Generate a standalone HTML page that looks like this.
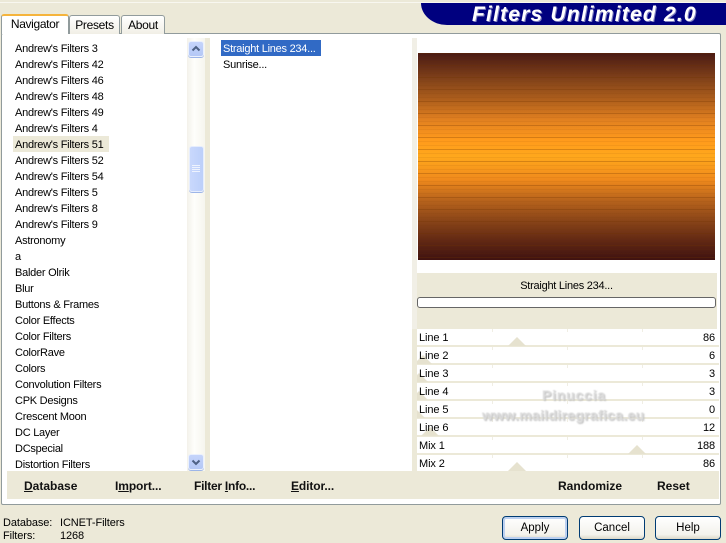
<!DOCTYPE html>
<html><head><meta charset="utf-8">
<style>
html,body{margin:0;padding:0}
body{width:726px;height:543px;overflow:hidden;position:relative;background:#ece9d8;font-family:"Liberation Sans",sans-serif;font-size:11px;color:#000}
div,span.a{position:absolute;white-space:nowrap}
.l{left:15px;height:16px;line-height:18px;letter-spacing:-.25px}
.b{font-weight:bold;font-size:12px;line-height:16px;color:#111}
.tab{background:linear-gradient(#fff,#f1efe6);border:1px solid #919b9c;border-bottom:none;border-radius:3px 3px 0 0;text-align:center;line-height:19px}
.row{left:417px;width:302px;height:16px;background:#fff}
.sep{left:417px;width:302px;height:2px;background:#ece9d8}
.n{left:419px;line-height:18px;height:16px;letter-spacing:-.1px}
.v{right:11px;line-height:18px;height:16px;letter-spacing:-.1px}
.t{width:1px;height:3px;background:#f0eee4}
.tri{width:0;height:0;border-left:9px solid transparent;border-right:9px solid transparent;border-bottom:9px solid #e6e2cf}
.btn{top:516px;width:64px;height:22px;border:1px solid #003c74;border-radius:4px;background:linear-gradient(#fff,#f3f2ec 80%,#dcd8c8);text-align:center;line-height:23px;font-size:11.5px}
u{text-decoration:underline}
</style></head><body>
<div style="left:0;top:2px;width:726px;height:1px;background:#f8f7f0"></div>

<div style="left:421px;top:3px;width:305px;height:22px;background:#00007f;border-bottom-left-radius:26px 22px"></div>
<div style="left:472px;top:3px;height:23px;line-height:23px;font-size:21px;font-weight:bold;font-style:italic;color:#fff;letter-spacing:1.2px;text-shadow:1px 1px 0 #7f7fbf">Filters Unlimited 2.0</div>

<div style="left:1px;top:33px;width:718px;height:470px;background:#fff;border:1px solid #919b9c;border-radius:2px"></div>

<div class="tab" style="left:69px;top:15px;width:49px;height:18px;line-height:19px;font-size:12px;letter-spacing:-.3px">Presets</div>
<div class="tab" style="left:121px;top:15px;width:42px;height:18px;line-height:19px;font-size:12px;letter-spacing:-.3px">About</div>
<div style="left:1px;top:14px;width:66px;height:18px;background:#fff;border:1px solid #919b9c;border-bottom:none;border-top:2px solid #f5b43c;border-radius:3px 3px 0 0;text-align:center;line-height:16px;font-size:12px;letter-spacing:-.35px">Navigator</div>

<div style="left:13px;top:136px;width:96px;height:16px;background:#ece9d8"></div>
<div class="l" style="top:40px">Andrew's Filters 3</div>
<div class="l" style="top:56px">Andrew's Filters 42</div>
<div class="l" style="top:72px">Andrew's Filters 46</div>
<div class="l" style="top:88px">Andrew's Filters 48</div>
<div class="l" style="top:104px">Andrew's Filters 49</div>
<div class="l" style="top:120px">Andrew's Filters 4</div>
<div class="l" style="top:136px">Andrew's Filters 51</div>
<div class="l" style="top:152px">Andrew's Filters 52</div>
<div class="l" style="top:168px">Andrew's Filters 54</div>
<div class="l" style="top:184px">Andrew's Filters 5</div>
<div class="l" style="top:200px">Andrew's Filters 8</div>
<div class="l" style="top:216px">Andrew's Filters 9</div>
<div class="l" style="top:232px">Astronomy</div>
<div class="l" style="top:248px">a</div>
<div class="l" style="top:264px">Balder Olrik</div>
<div class="l" style="top:280px">Blur</div>
<div class="l" style="top:296px">Buttons &amp; Frames</div>
<div class="l" style="top:312px">Color Effects</div>
<div class="l" style="top:328px">Color Filters</div>
<div class="l" style="top:344px">ColorRave</div>
<div class="l" style="top:360px">Colors</div>
<div class="l" style="top:376px">Convolution Filters</div>
<div class="l" style="top:392px">CPK Designs</div>
<div class="l" style="top:408px">Crescent Moon</div>
<div class="l" style="top:424px">DC Layer</div>
<div class="l" style="top:440px">DCspecial</div>
<div class="l" style="top:456px;height:15px;overflow:hidden">Distortion Filters</div>

<div style="left:187px;top:38px;width:18px;height:433px;background:linear-gradient(90deg,#f3f1ea,#fefefb 40%,#f6f5ee)"></div>
<div style="left:205px;top:38px;width:5px;height:433px;background:#ece9d8"></div>
<div style="left:412px;top:38px;width:5px;height:291px;background:#f1efe6"></div>

<div style="left:188px;top:41px;width:14px;height:14px;background:linear-gradient(#c5d4fb,#b4c8f6);border:1px solid #eaf0fd;border-radius:3px;box-shadow:0 1px 0 #9db5e8"></div>
<svg style="position:absolute;left:188px;top:41px" width="16" height="16"><path d="M4.5 9.5L8 6l3.500 3.500" fill="none" stroke="#4d6185" stroke-width="2"/></svg>
<div style="left:189px;top:146px;width:13px;height:44px;background:linear-gradient(90deg,#c9d8fc,#bccffa);border:1px solid #e6edfd;border-radius:3px;box-shadow:0 1px 0 #9db5e8"></div>
<div style="left:192px;top:165px;width:8px;height:1px;background:#eef3fe;box-shadow:0 2px 0 #eef3fe,0 4px 0 #eef3fe,0 6px 0 #eef3fe"></div>
<div style="left:188px;top:454px;width:14px;height:14px;background:linear-gradient(#c5d4fb,#b4c8f6);border:1px solid #eaf0fd;border-radius:3px;box-shadow:0 1px 0 #9db5e8"></div>
<svg style="position:absolute;left:188px;top:454px" width="16" height="16"><path d="M4.500 6.500L8 10l3.500-3.500" fill="none" stroke="#4d6185" stroke-width="2"/></svg>

<div style="left:221px;top:40px;width:100px;height:16px;background:#316ac5"></div>
<div class="l" style="left:223px;top:40px;color:#fff">Straight Lines 234...</div>
<div class="l" style="left:223px;top:56px">Sunrise...</div>

<div style="left:7px;top:471px;width:405px;height:28px;background:#ece9d8"></div>
<div class="b" style="left:24px;top:478px"><u>D</u>atabase</div>
<div class="b" style="left:115px;top:478px;letter-spacing:-.1px">I<u>m</u>port...</div>
<div class="b" style="left:194px;top:478px;letter-spacing:-.25px">Filter <u>I</u>nfo...</div>
<div class="b" style="left:291px;top:478px;letter-spacing:-.1px"><u>E</u>ditor...</div>

<div style="left:418px;top:53px;width:297px;height:207px;background:repeating-linear-gradient(180deg,rgba(110,50,0,.28) 0 1px,rgba(0,0,0,0) 1px 4px,rgba(110,50,0,.08) 4px 5px,rgba(0,0,0,0) 5px 8px,rgba(110,50,0,.08) 8px 9px,rgba(0,0,0,0) 9px 12px),linear-gradient(180deg,#4a1a14 0%,#83431a 13%,#b0601c 23%,#e07f20 32%,#ff9a1c 42%,#ffa81c 50%,#f08a1c 61%,#b8641c 71%,#8a4518 81%,#642a14 90%,#3f1210 100%)"></div>

<div style="left:417px;top:273px;width:300px;height:56px;background:#ece9d8"></div>
<div style="left:417px;top:278px;width:299px;height:16px;line-height:16px;text-align:center;letter-spacing:-.25px">Straight Lines 234...</div>
<div style="left:417px;top:297px;width:297px;height:9px;background:#fff;border:1px solid #666;border-radius:3px"></div>

<div class="row" style="top:329px"></div><div class="sep" style="top:345px"></div>
<div class="row" style="top:347px"></div><div class="sep" style="top:363px"></div>
<div class="row" style="top:365px"></div><div class="sep" style="top:381px"></div>
<div class="row" style="top:383px"></div><div class="sep" style="top:399px"></div>
<div class="row" style="top:401px"></div><div class="sep" style="top:417px"></div>
<div class="row" style="top:419px"></div><div class="sep" style="top:435px"></div>
<div class="row" style="top:437px"></div><div class="sep" style="top:453px"></div>
<div class="row" style="top:455px"></div>

<div class="t" style="left:492px;top:329px"></div><div class="t" style="left:567px;top:329px"></div><div class="t" style="left:642px;top:329px"></div>
<div class="t" style="left:492px;top:347px"></div><div class="t" style="left:567px;top:347px"></div><div class="t" style="left:642px;top:347px"></div>
<div class="t" style="left:492px;top:365px"></div><div class="t" style="left:567px;top:365px"></div><div class="t" style="left:642px;top:365px"></div>
<div class="t" style="left:492px;top:383px"></div><div class="t" style="left:567px;top:383px"></div><div class="t" style="left:642px;top:383px"></div>
<div class="t" style="left:492px;top:401px"></div><div class="t" style="left:567px;top:401px"></div><div class="t" style="left:642px;top:401px"></div>
<div class="t" style="left:492px;top:419px"></div><div class="t" style="left:567px;top:419px"></div><div class="t" style="left:642px;top:419px"></div>
<div class="t" style="left:492px;top:437px"></div><div class="t" style="left:567px;top:437px"></div><div class="t" style="left:642px;top:437px"></div>
<div class="t" style="left:492px;top:455px"></div><div class="t" style="left:567px;top:455px"></div><div class="t" style="left:642px;top:455px"></div>

<div class="tri" style="left:508px;top:337px"></div>
<div class="tri" style="left:414px;top:355px"></div>
<div class="tri" style="left:410px;top:373px"></div>
<div class="tri" style="left:410px;top:391px"></div>
<div class="tri" style="left:407px;top:409px"></div>
<div class="tri" style="left:421px;top:427px"></div>
<div class="tri" style="left:628px;top:445px"></div>
<div class="tri" style="left:508px;top:462px"></div>
<div style="left:405px;top:329px;width:7px;height:142px;background:#fff"></div>
<div style="left:412px;top:329px;width:5px;height:170px;background:#ece9d8"></div>

<div class="n" style="top:329px">Line 1</div><div class="v" style="top:329px">86</div>
<div class="n" style="top:347px">Line 2</div><div class="v" style="top:347px">6</div>
<div class="n" style="top:365px">Line 3</div><div class="v" style="top:365px">3</div>
<div class="n" style="top:383px">Line 4</div><div class="v" style="top:383px">3</div>
<div class="n" style="top:401px">Line 5</div><div class="v" style="top:401px">0</div>
<div class="n" style="top:419px">Line 6</div><div class="v" style="top:419px">12</div>
<div class="n" style="top:437px">Mix 1</div><div class="v" style="top:437px">188</div>
<div class="n" style="top:455px">Mix 2</div><div class="v" style="top:455px">86</div>

<div style="left:417px;top:471px;width:302px;height:28px;background:#ece9d8"></div>
<div class="b" style="left:558px;top:478px">Randomize</div>
<div class="b" style="left:657px;top:478px">Reset</div>

<div style="left:542px;top:387px;font-size:14px;font-weight:bold;line-height:16px;color:#dcdcdc;letter-spacing:.8px;text-shadow:1px 1px 1px #bdbdbd;filter:blur(.6px)">Pinuccia</div>
<div style="left:482px;top:407px;font-size:14px;font-weight:bold;line-height:16px;color:#dcdcdc;letter-spacing:.3px;text-shadow:1px 1px 1px #bdbdbd;filter:blur(.6px)">www.maildiregrafica.eu</div>

<div style="left:3px;top:516px;line-height:14px;letter-spacing:-.1px">Database:</div>
<div style="left:60px;top:516px;line-height:14px;letter-spacing:-.1px">ICNET-Filters</div>
<div style="left:3px;top:529px;line-height:14px;letter-spacing:-.1px">Filters:</div>
<div style="left:60px;top:529px;line-height:14px;letter-spacing:-.1px">1268</div>

<div class="btn" style="left:502px;box-shadow:inset 0 0 0 2px #bcd0f0">Apply</div>
<div class="btn" style="left:579px">Cancel</div>
<div class="btn" style="left:655px">Help</div>
</body></html>
